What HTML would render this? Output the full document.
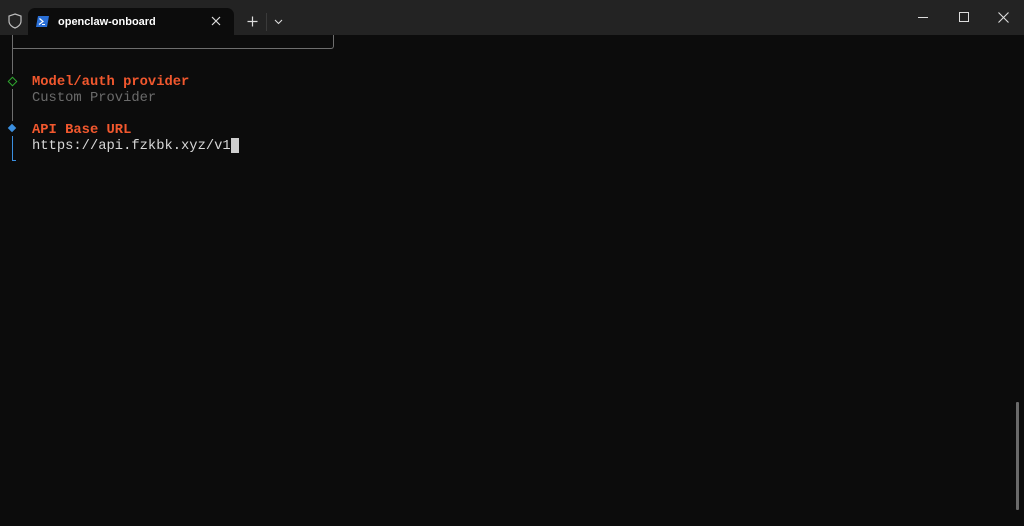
<!DOCTYPE html>
<html><head><style>
html,body{margin:0;padding:0;width:1024px;height:526px;overflow:hidden;background:#0c0c0c;}
body{position:relative;font-family:"Liberation Mono",monospace;}
.title{position:absolute;left:0;top:0;width:1024px;height:35px;background:#232323;}
.tab{position:absolute;left:28px;top:8px;width:206px;height:27px;background:#0c0c0c;border-radius:7px 7px 0 0;}
.tabtext{position:absolute;left:58px;top:16px;font:bold 11px "Liberation Sans",sans-serif;color:#fff;}
.t{position:absolute;left:32px;font-size:13.8px;line-height:16px;white-space:pre;}
.o{color:#f2582e;font-weight:bold;}
.g{color:#6b6b6b;}
.w{color:#d8d8d8;}
.v{position:absolute;width:1px;background:#6e6e6e;}
</style></head><body>
<div class="title"></div>
<svg style="position:absolute;left:8px;top:13px" width="14" height="16" viewBox="0 0 14 16"><path d="M7 1 L13 3 V8 C13 11.5 10 14 7 15 C4 14 1 11.5 1 8 V3 Z" fill="none" stroke="#bdbdbd" stroke-width="1.2"/></svg>
<div class="tab"></div>
<svg style="position:absolute;left:36px;top:16px" width="13" height="11" viewBox="0 0 13 11"><path d="M2 0 H13 L11 11 H0 Z" fill="#2a6fd6"/><path d="M3.5 2.5 L7 5.5 L3 8.5" stroke="#fff" stroke-width="1.2" fill="none"/><path d="M6 8.5 H9" stroke="#fff" stroke-width="1"/></svg>
<div class="tabtext">openclaw-onboard</div>
<svg style="position:absolute;left:211px;top:16px" width="10" height="10"><path d="M1 1 L9 9 M9 1 L1 9" stroke="#ddd" stroke-width="1.2"/></svg>
<svg style="position:absolute;left:247px;top:16px" width="11" height="11"><path d="M5.5 0.5 V10.5 M0.5 5.5 H10.5" stroke="#ddd" stroke-width="1.2"/></svg>
<div style="position:absolute;left:266px;top:13px;width:1px;height:18px;background:#3a3a3a"></div>
<svg style="position:absolute;left:274px;top:19px" width="9" height="6"><path d="M1 1 L4.5 4.5 L8 1" stroke="#ddd" stroke-width="1.1" fill="none"/></svg>
<div style="position:absolute;left:918px;top:17px;width:10px;height:1px;background:#ddd"></div>
<div style="position:absolute;left:959px;top:12px;width:8px;height:8px;border:1px solid #ddd"></div>
<svg style="position:absolute;left:998px;top:12px" width="11" height="11"><path d="M0.5 0.5 L10.5 10.5 M10.5 0.5 L0.5 10.5" stroke="#ddd" stroke-width="1.1"/></svg>

<div style="position:absolute;left:12px;top:35px;width:322px;height:14px;border-left:1px solid #6e6e6e;border-bottom:1px solid #6e6e6e;border-right:1px solid #6e6e6e;border-radius:0 0 3px 0;box-sizing:border-box;"></div>
<div style="position:absolute;left:13px;top:35px;width:319px;height:7px;background:#0c0c0c;"></div>
<div style="position:absolute;left:12px;top:35px;width:1px;height:13px;background:#6e6e6e"></div>
<div class="v" style="left:12px;top:49px;height:25px"></div>
<div style="position:absolute;left:9px;top:78px;width:5px;height:5px;border:1px solid #2fa82f;transform:rotate(45deg)"></div>
<div class="v" style="left:12px;top:89px;height:32px"></div>
<div style="position:absolute;left:9px;top:125px;width:6px;height:6px;background:#3b8fe0;transform:rotate(45deg)"></div>
<div style="position:absolute;left:12px;top:136px;width:1px;height:25px;background:#3b8fe0"></div>
<div style="position:absolute;left:12px;top:160px;width:4px;height:1px;background:#3b8fe0"></div>

<div class="t o" style="top:75px">Model/auth provider</div>
<div class="t g" style="top:91px">Custom Provider</div>
<div class="t o" style="top:123px">API Base URL</div>
<div class="t w" style="top:139px">https://api.fzkbk.xyz/v1</div>
<div style="position:absolute;left:231px;top:138px;width:8px;height:15px;background:#cfcfcf"></div>

<div style="position:absolute;left:1016px;top:402px;width:3px;height:108px;background:#6a6a6a;border-radius:1px"></div>
</body></html>
